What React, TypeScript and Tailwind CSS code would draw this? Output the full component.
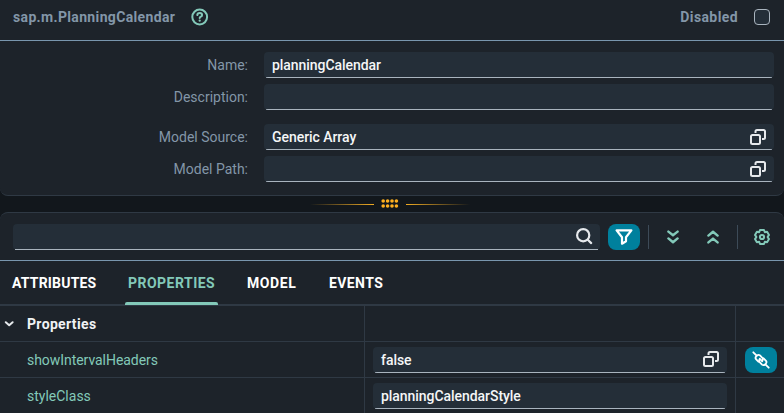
import React from "react";

const stroke = { fill: "none", strokeLinecap: "round", strokeLinejoin: "round" } as const;

function ValueHelpIcon() {
  return (
    <svg width="18" height="16" viewBox="0 0 18 16" className="shrink-0" stroke="#e6e9ec" strokeWidth="2" {...stroke} strokeLinecap="butt">
      <rect x="2" y="6" width="9" height="9" rx="1.5" />
      <path d="M6.5 4V2.5Q6.5 1 8 1H14.5Q16 1 16 2.5V8.5Q16 10 14.5 10H13" />
    </svg>
  );
}

function Field({ value = "", className, help = false }: { value?: string; className: string; help?: boolean }) {
  return (
    <div className={`flex h-[26px] flex-col overflow-hidden rounded-[4px] bg-[#242e38] ${className}`}>
      <div className="flex h-[25px] items-center justify-between pl-2 pr-[7px] text-[#f5f6f7]">
        <span className="whitespace-nowrap pt-px font-medium tracking-[-0.05px]">{value}</span>
        {help && <ValueHelpIcon />}
      </div>
      <div className="mx-[2px] h-px bg-[#a9b4be]" />
    </div>
  );
}

function FormRow({ label, value, help }: { label: string; value?: string; help?: boolean }) {
  return (
    <div className="flex h-[26px] items-center">
      <span className="mr-4 w-[248px] pb-px text-right text-[#8396a8]">{label}</span>
      <Field value={value} help={help} className="w-[510px]" />
    </div>
  );
}

function Splitter() {
  return (
    <div className="flex h-4 items-center bg-[#12171c] pl-[310px]">
      <div className="h-px w-16 bg-linear-to-r from-transparent to-[#f0ab23]" />
      <svg width="18" height="9" viewBox="0 0 18 9" className="mx-[7px] mb-px" fill="#ffb01f">
        {[2, 6.4, 10.8, 15.2].map((x) => (
          <g key={x}>
            <circle cx={x + 0.2} cy="2" r="1.8" />
            <circle cx={x + 0.2} cy="7" r="1.8" />
          </g>
        ))}
      </svg>
      <div className="h-px w-16 bg-linear-to-r from-[#f0ab23] to-transparent" />
    </div>
  );
}

function Toolbar() {
  return (
    <div className="flex h-12 items-center border-b border-[#7996ae] pl-[13px]">
      <div className="flex h-[26px] w-[587px] flex-col rounded-[4px] bg-[#242e38]">
        <div className="flex h-[25px] items-center justify-end pr-[7px]">
          <svg width="18" height="18" viewBox="0 0 18 18" stroke="#e6e9ec" strokeWidth="2.2" {...stroke}>
            <circle cx="8.2" cy="8.2" r="6.1" />
            <path d="M12.8 12.8L16.2 16.1" />
          </svg>
        </div>
        <div className="mx-[2px] h-px bg-[#a9b4be]" />
      </div>
      <div className="ml-2 flex h-[26px] w-8 items-center justify-center rounded-[8px] bg-[#00809d]">
        <svg width="18" height="16" viewBox="0 0 18 16" stroke="#fff" strokeWidth="2.2" {...stroke}>
          <path d="M1.6 1.4H16.4L11 8.2V12.2L7 14.7V8.2Z" />
        </svg>
      </div>
      <div className="ml-2 h-6 w-px bg-[#3d4b58]" />
      <svg width="12" height="14" viewBox="0 0 12 14" className="ml-[18px]" stroke="#83c9b9" strokeWidth="2.4" {...stroke}>
        <path d="M1.4 1.6L6 5.2L10.6 1.6M1.4 8.4L6 12.2L10.6 8.4" />
      </svg>
      <svg width="12" height="14" viewBox="0 0 12 14" className="ml-7" stroke="#83c9b9" strokeWidth="2.4" {...stroke}>
        <path d="M1.4 5.6L6 1.8L10.6 5.6M1.4 12.4L6 8.6L10.6 12.4" />
      </svg>
      <div className="ml-[18px] h-6 w-px bg-[#3d4b58]" />
      <svg width="18" height="18" viewBox="0 0 18 18" className="ml-[15px]" stroke="#83c9b9" strokeWidth="2" {...stroke}>
        <path d="M7 2H11L11.8 4.2L14.1 3.8L16 6.9L14.6 9L16 11.1L14.1 14.2L11.8 13.8L11 16H7L6.2 13.8L3.9 14.2L2 11.1L3.4 9L2 6.9L3.9 3.8L6.2 4.2Z" />
        <circle cx="9" cy="9" r="2.1" />
      </svg>
    </div>
  );
}

function Tab({ label, active = false, className }: { label: string; active?: boolean; className: string }) {
  return (
    <div className={`flex h-[44px] flex-col justify-between ${active ? "text-[#83c9b9]" : "text-white"} ${className}`}>
      <span className="whitespace-nowrap px-[3px] pt-[12px] font-bold">{label}</span>
      {active && <div className="h-[3px] rounded-t-[2px] bg-[#83c9b9]" />}
    </div>
  );
}

function TableRow({ name, field, action }: { name: React.ReactNode; field?: React.ReactNode; action?: React.ReactNode }) {
  return (
    <div className="flex h-9 border-b border-[#2f3944]">
      <div className="flex w-[365px] items-center border-r border-[#2f3944]">{name}</div>
      <div className="flex w-[371px] items-center border-r border-[#2f3944] pl-2">{field}</div>
      <div className="flex w-12 items-center pl-[9px]">{action}</div>
    </div>
  );
}

export default function App() {
  return (
    <div className="h-[413px] w-[784px] overflow-hidden bg-[#12171c] font-[Roboto,sans-serif] text-[14px] leading-[20px]">
      <section className="h-[196px] rounded-b-[8px] border-b border-[#2f3944] bg-[#1d232a]">
        <header className="flex h-[41px] items-center border-b border-[#7996ae] pb-[6px] pl-[13px] text-[#8396a8]">
          <span className="w-[178px] whitespace-nowrap font-bold tracking-[0.35px]">sap.m.PlanningCalendar</span>
          <svg width="18" height="18" viewBox="0 0 18 18" stroke="#83c9b9" strokeWidth="2" {...stroke}>
            <circle cx="8.7" cy="9" r="7.4" />
            <path d="M6.3 7.1Q6.4 5 8.7 5Q11.1 5 11.1 6.9Q11.1 8.1 9.5 8.8Q8.7 9.2 8.7 10" />
            <path d="M8.7 12.6V12.7" strokeWidth="2.2" />
          </svg>
          <span className="ml-auto font-bold tracking-[0.4px]">Disabled</span>
          <span className="ml-4 mr-[14px] h-4 w-4 rounded-[4px] border border-[#a9b4be] bg-[#242e38]" />
        </header>
        <div className="flex flex-col gap-[6px] pt-[11px]">
          <FormRow label="Name:" value="planningCalendar" />
          <FormRow label="Description:" />
          <div className="h-[2px]" />
          <FormRow label="Model Source:" value="Generic Array" help />
          <FormRow label="Model Path:" help />
        </div>
      </section>
      <Splitter />
      <section className="h-[201px] rounded-t-[8px] border-t border-[#2f3944] bg-[#1d232a]">
        <Toolbar />
        <nav className="flex h-[45px] border-b-2 border-[#2f3944] pl-[9px]">
          <Tab label="ATTRIBUTES" className="w-[116px] tracking-[0.2px]" />
          <Tab label="PROPERTIES" active className="w-[93px] tracking-[0.48px]" />
          <Tab label="MODEL" className="ml-[26px] w-[82px] tracking-[0.6px]" />
          <Tab label="EVENTS" className="tracking-[0.4px]" />
        </nav>
        <TableRow
          name={
            <>
              <svg width="10" height="8" viewBox="0 0 10 8" className="ml-1 mr-[13px]" stroke="#e6e9ec" strokeWidth="2" {...stroke}>
                <path d="M1.8 2.2L5.2 5.2L8.6 2.2" />
              </svg>
              <span className="pt-px font-bold tracking-[0.35px] text-[#f0f2f4]">Properties</span>
            </>
          }
        />
        <TableRow
          name={<span className="pl-[27px] pt-px tracking-[-0.05px] text-[#83c9b9]">showIntervalHeaders</span>}
          field={<Field value="false" help className="w-[354px]" />}
          action={
            <div className="flex h-[26px] w-8 items-center justify-center rounded-[8px] bg-[#00809d]">
              <svg width="18" height="18" viewBox="0 0 18 18" stroke="#fff" strokeWidth="1.8" {...stroke}>
                <path d="M1.3 1.3L4.4 4.4M13.6 13.6L16.7 16.7M7.8 7.8L10.2 10.2" />
                <path d="M6.4 10.7L4.2 8.4Q2.8 6.9 4.2 5.3L5 4.5Q6.5 3.2 8 4.4L10.3 6.8Q11.5 8.3 10.2 9.8" />
                <path d="M11.6 7.3L13.8 9.6Q15.2 11.1 13.8 12.7L13 13.5Q11.5 14.8 10 13.6L7.7 11.2Q6.5 9.7 7.8 8.2" />
              </svg>
            </div>
          }
        />
        <TableRow
          name={<span className="pl-[27px] pt-px text-[#83c9b9]">styleClass</span>}
          field={<Field value="planningCalendarStyle" className="w-[354px]" />}
        />
      </section>
    </div>
  );
}
